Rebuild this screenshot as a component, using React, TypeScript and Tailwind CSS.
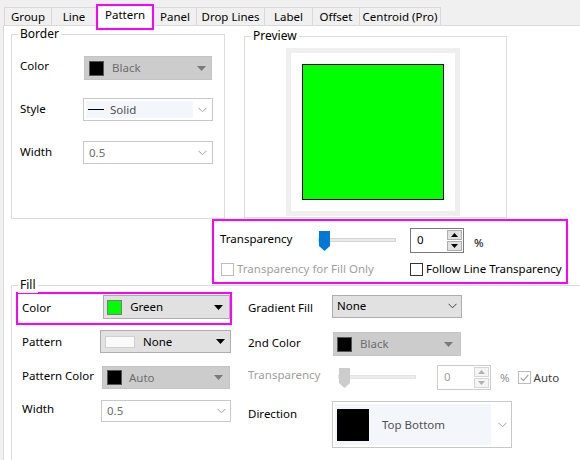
import React from 'react'

function Tri({ color = '#000' }: { color?: string }) {
  return (
    <svg width="9" height="5" viewBox="0 0 9 5" className="shrink-0">
      <path d="M0 0h9L4.5 5z" fill={color} />
    </svg>
  )
}

function Chevron({ color = '#a0a0a0' }: { color?: string }) {
  return (
    <svg width="9" height="6" viewBox="0 0 9 6" className="shrink-0">
      <path d="M0.5 0.8L4.5 4.8L8.5 0.8" stroke={color} fill="none" strokeWidth="1" />
    </svg>
  )
}

function GroupBox({ title, className, children }: { title: string; className: string; children?: React.ReactNode }) {
  return (
    <div className={`relative border border-[#dcdcdc] ${className}`}>
      <span className="absolute left-[6px] top-[-9px] bg-white px-[2px] leading-[16px] text-[12px]">{title}</span>
      {children}
    </div>
  )
}

function Spin({ disabled = false }: { disabled?: boolean }) {
  const tri = disabled ? '#b0b0b0' : '#000'
  return (
    <div
      className={`flex h-[25px] w-[54px] border bg-white ${disabled ? 'border-[#cccccc] text-[#a0a0a0]' : 'border-[#7a7a7a]'}`}
    >
      <span className="flex-1 pl-[6px] pt-[3px]">0</span>
      <div className="flex w-[16px] flex-col gap-px py-px pr-px">
        <div className={`flex flex-1 items-center justify-center border ${disabled ? 'border-[#d5d5d5] bg-[#f4f4f4]' : 'border-[#adadad] bg-[#e1e1e1]'}`}>
          <svg width="7" height="4" viewBox="0 0 7 4">
            <path d="M0 4h7L3.5 0z" fill={tri} />
          </svg>
        </div>
        <div className={`flex flex-1 items-center justify-center border ${disabled ? 'border-[#d5d5d5] bg-[#f4f4f4]' : 'border-[#adadad] bg-[#e1e1e1]'}`}>
          <svg width="7" height="4" viewBox="0 0 7 4">
            <path d="M0 0h7L3.5 4z" fill={tri} />
          </svg>
        </div>
      </div>
    </div>
  )
}

function Slider({ disabled = false }: { disabled?: boolean }) {
  return (
    <div className="relative h-[20px] w-[78px]">
      <div className={`absolute left-0 right-0 top-[7px] h-[4px] border ${disabled ? 'border-[#e3e3e3] bg-[#ececec]' : 'border-[#d6d6d6] bg-[#e7eaea]'}`} />
      <svg width="11" height="20" viewBox="0 0 11 20" className="absolute left-[1px] top-0">
        <path d="M0 0h11v15l-5.5 5L0 15z" fill={disabled ? '#cccccc' : '#0078d7'} />
      </svg>
    </div>
  )
}

function Check({ disabled = false, checked = false }: { disabled?: boolean; checked?: boolean }) {
  return (
    <span
      className={`flex h-[13px] w-[13px] shrink-0 items-center justify-center border bg-white ${disabled ? 'border-[#bcbcbc]' : 'border-[#333333]'}`}
    >
      {checked && (
        <svg width="9" height="8" viewBox="0 0 9 8">
          <path d="M0.8 4L3.4 6.6L8.3 0.8" stroke="#a0a0a0" fill="none" strokeWidth="1.1" />
        </svg>
      )}
    </span>
  )
}

const tabs = [
  { name: 'Group', w: 'w-[47px]' },
  { name: 'Line', w: 'w-[45px]' },
  { name: 'Pattern', w: 'w-[58px]' },
  { name: 'Panel', w: 'w-[43px]' },
  { name: 'Drop Lines', w: 'w-[68px]' },
  { name: 'Label', w: 'w-[48px]' },
  { name: 'Offset', w: 'w-[47px]' },
  { name: 'Centroid (Pro)', w: 'w-[82px]' },
]

export default function App() {
  return (
    <div className="h-[460px] w-[580px] overflow-hidden whitespace-nowrap bg-[#f0f0f0] font-['Segoe_UI','Noto_Sans',sans-serif] text-[11.5px] leading-[16px] text-black">
      {/* Tabs */}
      <div className="flex h-[25px] items-end pl-[4px]">
        {tabs.map((t, i) =>
          t.name === 'Pattern' ? (
            <div
              key={t.name}
              className={`relative z-10 -mb-[5px] -mr-px flex h-[26px] items-start justify-center border-2 border-[#ff00ff] bg-white pt-px ${t.w}`}
            >
              {t.name}
            </div>
          ) : (
            <div
              key={t.name}
              className={`flex h-[18px] items-center justify-center border-l border-t border-[#d9d9d9] bg-[#f0f0f0] ${t.w} ${i === tabs.length - 1 ? 'border-r' : ''}`}
            >
              {t.name}
            </div>
          )
        )}
      </div>

      {/* Tab page */}
      <div className="ml-[3px] h-[435px] border-l border-t border-[#d9d9d9] bg-white pl-[7px]">
        <div className="flex items-start">
          {/* Border */}
          <GroupBox title="Border" className="mt-[8px] h-[185px] w-[214px]">
            <div className="flex flex-col pl-[8px] pt-[21px]">
              <div className="flex h-[24px] items-center">
                <span className="-mt-[5px] w-[64px]">Color</span>
                <div className="flex h-[24px] w-[128px] items-center border border-[#c4c4c4] bg-[#cccccc] pl-[4px] pr-[5px]">
                  <span className="h-[15px] w-[15px] border border-[#555] bg-black" />
                  <span className="ml-[8px] flex-1 text-[#6d6d6d]">Black</span>
                  <Tri color="#7a7a7a" />
                </div>
              </div>
              <div className="mt-[18px] flex h-[23px] items-center">
                <span className="-mt-[1px] w-[63px]">Style</span>
                <div className="flex h-[23px] w-[130px] items-center border border-[#c8c8c8] bg-white p-[2px] pr-[5px]">
                  <div className="flex h-full w-[107px] items-center bg-[#f3f6fb] pl-[2px]">
                    <span className="h-px w-[16px] bg-black" />
                    <span className="ml-[6px] text-[#505050]">Solid</span>
                  </div>
                  <span className="flex-1" />
                  <Chevron />
                </div>
              </div>
              <div className="mt-[20px] flex h-[23px] items-center">
                <span className="-mt-[1px] w-[63px]">Width</span>
                <div className="flex h-[23px] w-[130px] items-center border border-[#c8c8c8] bg-white pl-[5px] pr-[5px]">
                  <span className="flex-1 text-[#6d6d6d]">0.5</span>
                  <Chevron />
                </div>
              </div>
            </div>
          </GroupBox>

          {/* Preview */}
          <GroupBox title="Preview" className="ml-[19px] mt-[10px] h-[182px] w-[263px]">
            <div className="ml-[41px] mt-[11px] h-[168px] w-[174px] border-[5px] border-[#efefef] bg-white pl-[11px] pt-[11px]">
              <div className="h-[136px] w-[142px] border border-black bg-[#00ff00]" />
            </div>
          </GroupBox>
        </div>

        {/* Transparency (highlighted) */}
        <div className="ml-[201px] h-[65px] w-[356px] border-2 border-[#ff00ff] pt-[7px]">
          <div className="flex items-center pl-[6px]">
            <span className="-mt-[3px] w-[98px]">Transparency</span>
            <Slider />
            <div className="ml-[14px]">
              <Spin />
            </div>
            <span className="ml-[10px] mt-[5px]">%</span>
          </div>
          <div className="mt-[8px] flex items-center">
            <div className="flex w-[196px] items-center gap-[3px] pl-[7px]">
              <Check disabled />
              <span className="text-[#a0a0a0]">Transparency for Fill Only</span>
            </div>
            <div className="flex items-center gap-[3px]">
              <Check />
              <span>Follow Line Transparency</span>
            </div>
          </div>
        </div>

        {/* Fill */}
        <GroupBox title="Fill" className="mt-px h-[200px] w-[600px]">
          <div className="flex items-start">
            {/* Left column */}
            <div className="flex w-[220px] flex-col pl-[4px] pt-[6px]">
              <div className="flex h-[33px] items-start border-2 border-[#ff00ff] pl-[4px] pt-px">
                <span className="mt-[5px] w-[82px]">Color</span>
                <div className="flex h-[24px] w-[128px] items-center border border-[#adadad] bg-[#e1e1e1] pl-[3px] pr-[6px]">
                  <span className="h-[15px] w-[15px] border border-[#7a7a7a] bg-[#00ff00]" />
                  <span className="ml-[8px] flex-1">Green</span>
                  <Tri />
                </div>
              </div>
              <div className="mt-[5px] flex h-[23px] items-center pl-[6px]">
                <span className="mt-[1px] w-[78px]">Pattern</span>
                <div className="flex h-[23px] w-[131px] items-center border border-[#adadad] bg-[#e1e1e1] pl-[4px] pr-[5px]">
                  <span className="h-[12px] w-[30px] border border-[#d0d0d0] bg-[#fafafa]" />
                  <span className="ml-[8px] flex-1">None</span>
                  <Tri />
                </div>
              </div>
              <div className="mt-[13px] flex h-[23px] items-center pl-[6px]">
                <span className="-mt-[3px] w-[80px]">Pattern Color</span>
                <div className="flex h-[23px] w-[128px] items-center border border-[#c4c4c4] bg-[#cccccc] pl-[4px] pr-[6px]">
                  <span className="h-[15px] w-[15px] border border-[#555] bg-black" />
                  <span className="ml-[7px] flex-1 text-[#6d6d6d]">Auto</span>
                  <Tri color="#7a7a7a" />
                </div>
              </div>
              <div className="mt-[11px] flex h-[22px] items-center pl-[6px]">
                <span className="-mt-[5px] w-[79px]">Width</span>
                <div className="flex h-[22px] w-[130px] items-center border border-[#c8c8c8] bg-white pl-[5px] pr-[4px]">
                  <span className="flex-1 text-[#6d6d6d]">0.5</span>
                  <Chevron />
                </div>
              </div>
            </div>

            {/* Right column */}
            <div className="ml-[16px] flex flex-col pt-[9px]">
              <div className="flex h-[23px] items-center">
                <span className="mt-[3px] w-[84px]">Gradient Fill</span>
                <div className="flex h-[23px] w-[130px] items-start border border-[#adadad] bg-[#e1e1e1] pl-[4px] pr-[4px] pt-[2px]">
                  <span className="flex-1">None</span>
                  <span className="mt-[5px]">
                    <Chevron color="#404040" />
                  </span>
                </div>
              </div>
              <div className="mt-[14px] flex h-[24px] items-center">
                <span className="-mt-[2px] w-[85px]">2nd Color</span>
                <div className="flex h-[24px] w-[128px] items-center border border-[#c4c4c4] bg-[#cccccc] pl-[3px] pr-[7px]">
                  <span className="h-[15px] w-[15px] border border-[#555] bg-black" />
                  <span className="ml-[8px] flex-1 text-[#6d6d6d]">Black</span>
                  <Tri color="#7a7a7a" />
                </div>
              </div>
              <div className="mt-[9px] flex h-[25px] items-center">
                <span className="-mt-[6px] w-[90px] text-[#a0a0a0]">Transparency</span>
                <Slider disabled />
                <div className="ml-[21px]">
                  <Spin disabled />
                </div>
                <span className="ml-[9px] text-[#909090]">%</span>
                <span className="ml-[8px]">
                  <Check disabled checked />
                </span>
                <span className="ml-[3px] text-[#404040]">Auto</span>
              </div>
              <div className="mt-[11px] flex items-start">
                <span className="mt-[5px] w-[84px]">Direction</span>
                <div className="flex h-[47px] w-[180px] items-center border border-[#c8c8c8] bg-white p-[2px] pr-[4px]">
                  <div className="flex h-full w-[156px] items-center bg-[#f3f6fb] pl-[2px]">
                    <span className="h-[32px] w-[32px] bg-black" />
                    <span className="ml-[13px] text-[#505050]">Top Bottom</span>
                  </div>
                  <span className="flex-1" />
                  <Chevron />
                </div>
              </div>
            </div>
          </div>
        </GroupBox>
      </div>
    </div>
  )
}
